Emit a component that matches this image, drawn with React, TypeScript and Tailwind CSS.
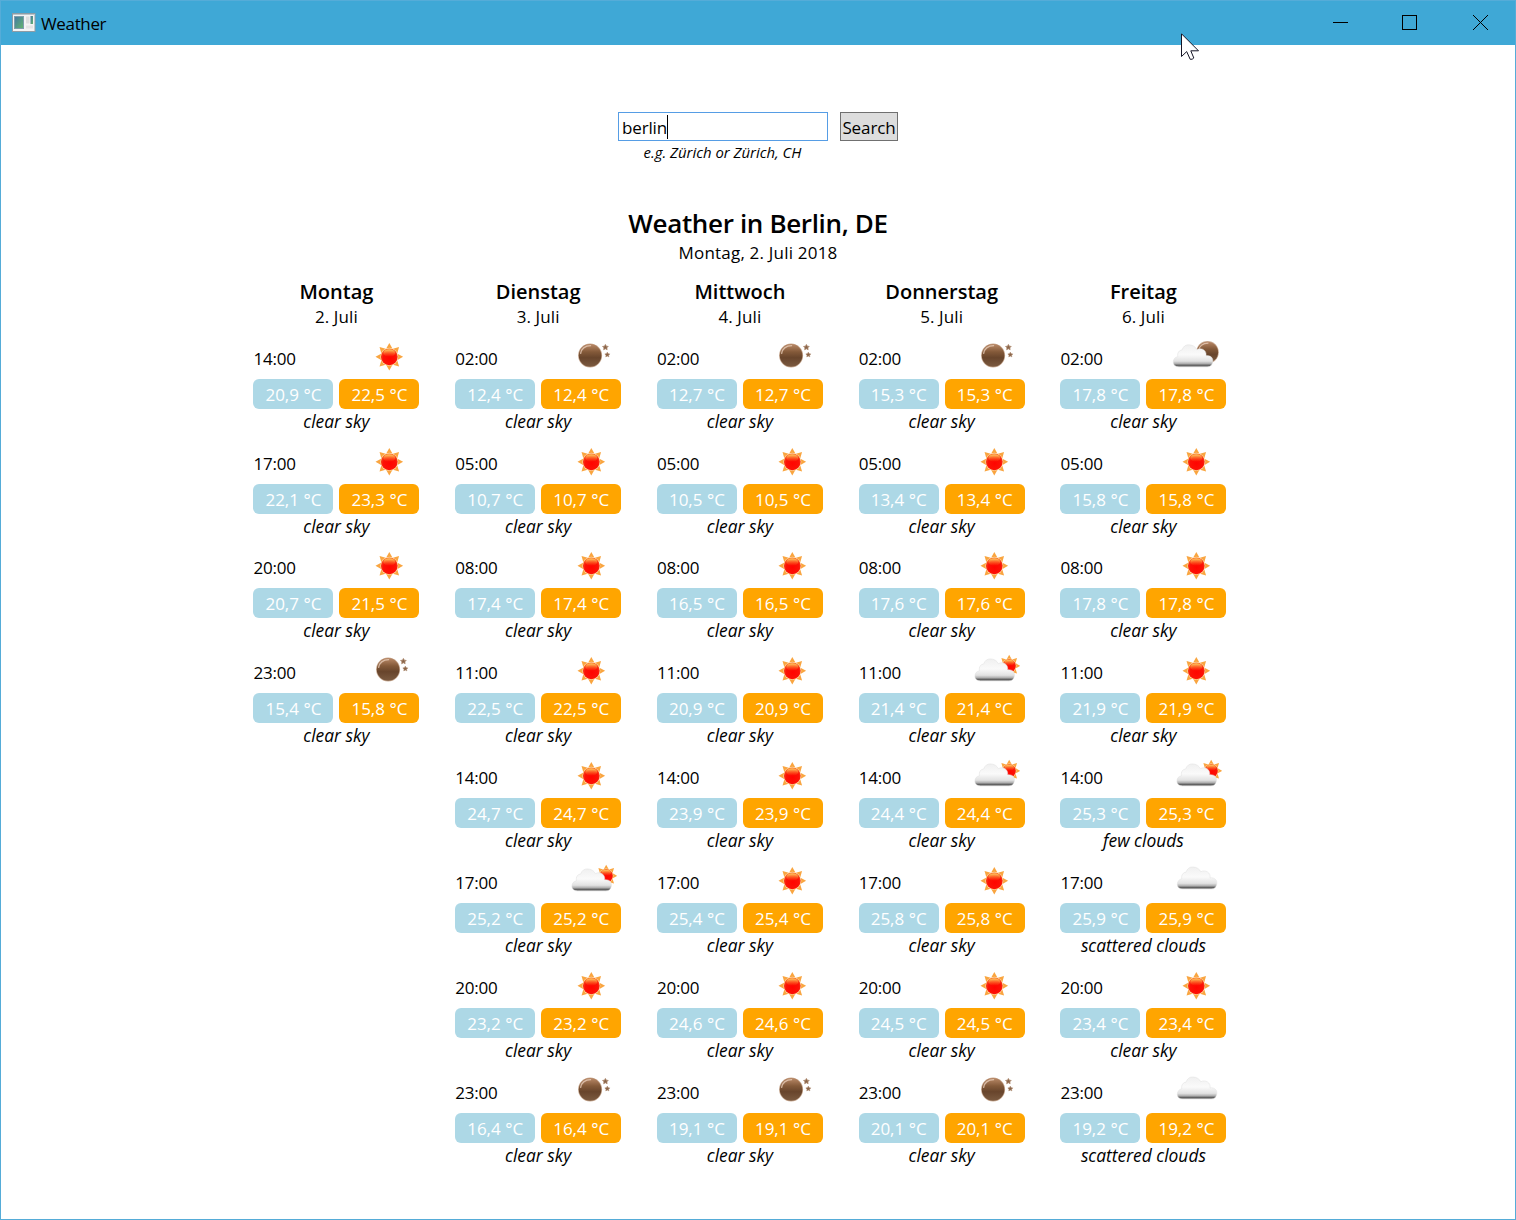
import React from "react";

type Kind = "sun" | "moon" | "cloudMoon" | "cloudSun" | "cloud";
type Entry = [time: string, kind: Kind, min: string, max: string, text?: string];
type Day = { name: string; date: string; entries: Entry[] };

const days: Day[] = [
  {
    name: "Montag",
    date: "2. Juli",
    entries: [
      ["14:00", "sun", "20,9", "22,5"],
      ["17:00", "sun", "22,1", "23,3"],
      ["20:00", "sun", "20,7", "21,5"],
      ["23:00", "moon", "15,4", "15,8"],
    ],
  },
  {
    name: "Dienstag",
    date: "3. Juli",
    entries: [
      ["02:00", "moon", "12,4", "12,4"],
      ["05:00", "sun", "10,7", "10,7"],
      ["08:00", "sun", "17,4", "17,4"],
      ["11:00", "sun", "22,5", "22,5"],
      ["14:00", "sun", "24,7", "24,7"],
      ["17:00", "cloudSun", "25,2", "25,2"],
      ["20:00", "sun", "23,2", "23,2"],
      ["23:00", "moon", "16,4", "16,4"],
    ],
  },
  {
    name: "Mittwoch",
    date: "4. Juli",
    entries: [
      ["02:00", "moon", "12,7", "12,7"],
      ["05:00", "sun", "10,5", "10,5"],
      ["08:00", "sun", "16,5", "16,5"],
      ["11:00", "sun", "20,9", "20,9"],
      ["14:00", "sun", "23,9", "23,9"],
      ["17:00", "sun", "25,4", "25,4"],
      ["20:00", "sun", "24,6", "24,6"],
      ["23:00", "moon", "19,1", "19,1"],
    ],
  },
  {
    name: "Donnerstag",
    date: "5. Juli",
    entries: [
      ["02:00", "moon", "15,3", "15,3"],
      ["05:00", "sun", "13,4", "13,4"],
      ["08:00", "sun", "17,6", "17,6"],
      ["11:00", "cloudSun", "21,4", "21,4"],
      ["14:00", "cloudSun", "24,4", "24,4"],
      ["17:00", "sun", "25,8", "25,8"],
      ["20:00", "sun", "24,5", "24,5"],
      ["23:00", "moon", "20,1", "20,1"],
    ],
  },
  {
    name: "Freitag",
    date: "6. Juli",
    entries: [
      ["02:00", "cloudMoon", "17,8", "17,8"],
      ["05:00", "sun", "15,8", "15,8"],
      ["08:00", "sun", "17,8", "17,8"],
      ["11:00", "sun", "21,9", "21,9"],
      ["14:00", "cloudSun", "25,3", "25,3", "few clouds"],
      ["17:00", "cloud", "25,9", "25,9", "scattered clouds"],
      ["20:00", "sun", "23,4", "23,4"],
      ["23:00", "cloud", "19,2", "19,2", "scattered clouds"],
    ],
  },
];

function Gradients() {
  return (
    <svg className="absolute h-0 w-0" aria-hidden="true">
      <defs>
        <radialGradient id="sunFill" cx="0.52" cy="0.6" r="0.64">
          <stop offset="0" stopColor="#ff0500" />
          <stop offset="0.6" stopColor="#fc1206" />
          <stop offset="0.82" stopColor="#f8401a" />
          <stop offset="1" stopColor="#fba23c" />
        </radialGradient>
        <linearGradient id="sunGloss" x1="0" y1="0" x2="0" y2="1">
          <stop offset="0" stopColor="#ffd766" stopOpacity="0.95" />
          <stop offset="1" stopColor="#fb8a2a" stopOpacity="0" />
        </linearGradient>
        <linearGradient id="moonFill" x1="0" y1="0" x2="0" y2="1">
          <stop offset="0" stopColor="#b98967" />
          <stop offset="0.35" stopColor="#835939" />
          <stop offset="0.6" stopColor="#68452c" />
          <stop offset="1" stopColor="#7b5a40" />
        </linearGradient>
        <linearGradient id="cloudFill" x1="0" y1="0" x2="0" y2="1">
          <stop offset="0" stopColor="#f0f0f0" />
          <stop offset="0.45" stopColor="#fafafa" />
          <stop offset="0.74" stopColor="#e2e2e2" />
          <stop offset="0.85" stopColor="#b0b0b0" />
          <stop offset="0.93" stopColor="#5f5f5f" />
          <stop offset="1" stopColor="#a8a8a8" />
        </linearGradient>
      </defs>
    </svg>
  );
}

function Sun({ x, y, s = 1 }: { x: number; y: number; s?: number }) {
  return (
    <g transform={`translate(${x} ${y}) scale(${s})`}>
      {[0, 45, 90, 135, 180, 225, 270, 315].map((a) => (
        <path key={a} d="M-3.1-8.2L0-13.8 3.1-8.2Z" fill="#f9a540" transform={`rotate(${a})`} />
      ))}
      <circle r="9" fill="#ffdfae" />
      <circle r="8.4" fill="url(#sunFill)" />
      <ellipse cy="-3.8" rx="6" ry="3.8" fill="url(#sunGloss)" />
    </g>
  );
}

function Moon({ x, y, s = 1 }: { x: number; y: number; s?: number }) {
  return (
    <g transform={`translate(${x} ${y}) scale(${s})`}>
      <circle r="12" fill="#c9ab94" />
      <circle r="11.3" fill="url(#moonFill)" />
      <path d="M-9.6-1.5C-9.2-6.5-5-9.8 1-9.7" fill="none" stroke="#e8cdb9" strokeWidth="1.3" opacity="0.8" />
    </g>
  );
}

function Star({ x, y, r }: { x: number; y: number; r: number }) {
  return (
    <path
      transform={`translate(${x} ${y}) scale(${r})`}
      d="M0-1L.32-.38.98-.3.5.18.6.85 0 .52-.6.85-.5.18-.98-.3-.32-.38Z"
      fill="#8a6549"
      stroke="#a98468"
      strokeWidth="0.25"
    />
  );
}

function Cloud({ x, y }: { x: number; y: number }) {
  return (
    <path
      transform={`translate(${x} ${y})`}
      d="M6 22.5C2.3 22.5.3 20.4.3 17.6.3 14.6 2.3 12.6 4.8 12.3 4 8.3 6.4 5.6 9 5.6 10.3 1.9 12.6.4 15.6.4 19.5.4 22.4 2.2 23.8 5.2 28.4 2.6 34 6 33 11.2 38 10.8 40.3 13.8 39.8 17.2 39.4 20.6 37.4 22.5 34.2 22.5Z"
      fill="url(#cloudFill)"
      stroke="#dedede"
      strokeWidth="0.5"
    />
  );
}

function WeatherIcon({ kind }: { kind: Kind }) {
  return (
    <svg width="50" height="36" viewBox="0 0 50 36" className="shrink-0">
      {kind === "sun" && <Sun x={24.3} y={18.8} />}
      {kind === "moon" && (
        <>
          <Moon x={23.1} y={17.4} />
          <Star x={38.4} y={9.3} r={2.9} />
          <Star x={40.3} y={16.7} r={2.5} />
        </>
      )}
      {kind === "cloudMoon" && (
        <>
          <Moon x={35.5} y={14.3} s={0.94} />
          <Cloud x={1} y={6.4} />
        </>
      )}
      {kind === "cloudSun" && (
        <>
          <Sun x={39.2} y={13.8} s={0.8} />
          <Cloud x={4.6} y={6.5} />
        </>
      )}
      {kind === "cloud" && <Cloud x={5} y={4.6} />}
    </svg>
  );
}

function Forecast({ entry }: { entry: Entry }) {
  const [time, kind, min, max, text = "clear sky"] = entry;
  return (
    <div className="h-[104.85px]">
      <div className="flex h-[41px] justify-between">
        <span className="mt-[9px] leading-6 tracking-[-0.2px]">{time}</span>
        <div className="-mr-[3.5px] w-[58px]">
          <WeatherIcon kind={kind} />
        </div>
      </div>
      <div className="flex gap-1.5 text-white">
        <div className="h-[30px] flex-1 rounded-[6px] bg-[#add8e6] text-center leading-[31px]">{min} °C</div>
        <div className="h-[30px] flex-1 rounded-[6px] bg-[#ffa500] text-center leading-[31px]">{max} °C</div>
      </div>
      <div className="mt-px text-center text-[17.4px] leading-[23px] italic">{text}</div>
    </div>
  );
}

function TitleBar() {
  return (
    <header className="flex h-11 items-center bg-[#3fa8d6]">
      <svg width="24" height="20" viewBox="0 0 24 20" className="ml-[11px]">
        <rect x="0.5" y="0.5" width="22.5" height="18" fill="#f4f4f4" stroke="#8e9ca5" />
        <path d="M1 1.5h21.5" stroke="#b9c4ca" />
        <defs>
          <linearGradient id="appPane" x1="0" y1="0" x2="1" y2="1">
            <stop offset="0" stopColor="#4279a6" />
            <stop offset="1" stopColor="#65b56c" />
          </linearGradient>
        </defs>
        <rect x="2.5" y="3.5" width="9" height="12" fill="url(#appPane)" stroke="#7e9eac" />
        <rect x="14" y="3.5" width="3.5" height="7" fill="#dedede" />
        <rect x="18.5" y="3" width="2.5" height="8" fill="url(#appPane)" />
        <rect x="14" y="12.5" width="7" height="3" fill="#e4e4e4" />
      </svg>
      <span className="ml-[5px] pt-0.5 tracking-[-0.35px]">Weather</span>
      <svg width="156" height="16" viewBox="0 0 156 16" className="mr-[26px] ml-auto" fill="none" stroke="#000">
        <path d="M0 7.5h15" />
        <rect x="69.5" y="0.5" width="14" height="14" />
        <path d="M140 0l15 15m0-15l-15 15" />
      </svg>
    </header>
  );
}

export default function App() {
  return (
    <div className="relative h-[1220px] w-[1516px] overflow-hidden border border-[#55acd8] bg-white font-['Open_Sans',sans-serif] text-[17px] text-black">
      <Gradients />
      <TitleBar />
      <svg width="20" height="30" viewBox="0 0 20 30" className="absolute top-8 left-[1180px]">
        <path
          d="M.5.8V23.5L5.7 18.6 9.2 26.3Q11.3 26.8 12.8 25L9.8 17.8H17.5Z"
          fill="#fff"
          stroke="#151525"
        />
      </svg>
      <main className="flex flex-col items-center">
        <div className="mt-[67px] flex h-[29px] gap-3">
          <div className="flex w-[210px] items-center border border-[#569de5] pl-[3px]">
            <span className="pt-0.5 tracking-[-0.15px]">berlin</span>
            <span className="h-6 w-px bg-black" />
          </div>
          <button className="w-[58px] border border-[#707070] bg-[#dddddd] pt-0.5 leading-6 tracking-[-0.1px]">
            Search
          </button>
        </div>
        <div className="mr-[71px] w-[210px] text-center text-[14.9px] leading-[22px] italic">
          e.g. Zürich or Zürich, CH
        </div>
        <h1 className="mt-[42px] text-[26px] leading-9 font-semibold tracking-[-0.35px]">Weather in Berlin, DE</h1>
        <p className="leading-6 tracking-[0.2px]">Montag, 2. Juli 2018</p>
        <div className="mt-[13px] mr-[36.2px] flex gap-[35.75px]">
          {days.map((day) => (
            <section key={day.name} className="w-[166px]">
              <h2 className="text-center text-[20px] leading-[27px] font-semibold">{day.name}</h2>
              <p className="mb-[8.8px] text-center leading-6 tracking-[0.1px]">{day.date}</p>
              {day.entries.map((entry) => (
                <Forecast key={entry[0]} entry={entry} />
              ))}
            </section>
          ))}
        </div>
      </main>
    </div>
  );
}
